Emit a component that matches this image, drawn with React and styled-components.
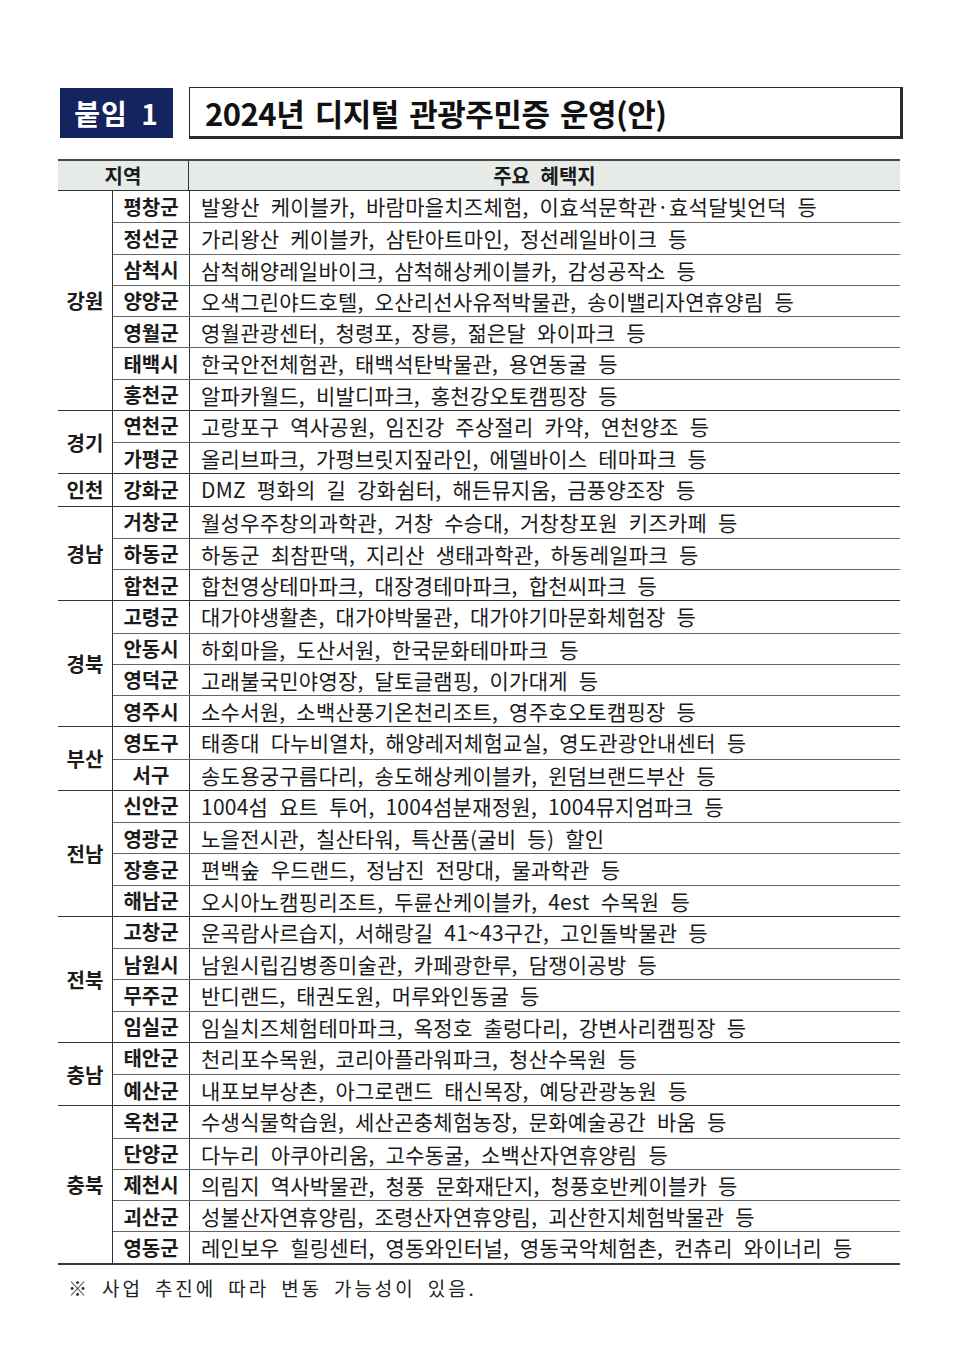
import React from "react";
import styled, { createGlobalStyle } from "styled-components";

const Global = createGlobalStyle`
  html, body { margin: 0; padding: 0; background: #fff; }
  body { font-family: "Noto Sans CJK KR", "Noto Sans", sans-serif; color: #1b1b1b; }
`;

const Page = styled.div`
  width: 960px;
  padding: 87px 0 40px 58px;
  box-sizing: border-box;
`;

const TitleRow = styled.div`
  display: flex;
  gap: 16px;
  align-items: flex-start;
  width: 845px;
`;

const Badge = styled.div`
  margin-left: 2px;
  margin-top: 1px;
  width: 113px;
  height: 50px;
  background: #14245e;
  color: #fff;
  display: flex;
  align-items: center;
  justify-content: center;
  font-size: 28px;
  font-weight: 700;
  letter-spacing: 1px;
  word-spacing: 6px;
`;

const TitleBox = styled.div`
  flex: 1;
  height: 52px;
  box-sizing: border-box;
  border: 1px solid #2a2a2a;
  border-right-width: 3px;
  border-bottom-width: 3px;
  display: flex;
  align-items: center;
  padding-left: 15px;
  font-size: 31px;
  font-weight: 700;
  letter-spacing: -0.5px;
  word-spacing: 4px;
  color: #111;
`;

const Table = styled.div`
  margin-top: 20px;
  width: 842px;
  border-top: 2px solid #4a4a4a;
  border-bottom: 2px solid #3a3a3a;
`;

const HeadRow = styled.div`
  display: grid;
  grid-template-columns: 131px 1fr;
  height: 30px;
  box-sizing: border-box;
  background: #e6ebe8;
  border-bottom: 1px solid #333;
`;

const HeadCell = styled.div`
  display: flex;
  align-items: center;
  justify-content: center;
  font-size: 20px;
  font-weight: 700;
  word-spacing: 6px;
  padding-bottom: 1px;
  border-right: ${p => (p.$divider ? "1px solid #333" : "none")};
`;

const Group = styled.div`
  display: flex;
  border-top: ${p => (p.$first ? "none" : "1px solid #333")};
`;

const RegionCell = styled.div`
  width: 54px;
  flex: none;
  border-right: 1px solid #333;
  display: flex;
  align-items: center;
  justify-content: center;
  font-size: 20px;
  font-weight: 700;
`;

const SubList = styled.div`
  flex: 1;
  display: flex;
  flex-direction: column;
`;

const Row = styled.div`
  display: grid;
  grid-template-columns: 77px 1fr;
  height: 31.26px;
  box-sizing: border-box;
  border-top: ${p => (p.$first ? "none" : "1px solid #666")};
`;

const SubCell = styled.div`
  border-right: 1px solid #333;
  display: flex;
  align-items: center;
  justify-content: center;
  font-size: 20px;
  font-weight: 700;
  padding-bottom: 3px;
`;

const Content = styled.div`
  display: flex;
  align-items: center;
  padding-left: 11px;
  padding-bottom: 3px;
  font-size: 21px;
  letter-spacing: 0.25px;
  word-spacing: 6px;
  white-space: nowrap;
  color: #1b1b1b;
`;

const Note = styled.div`
  margin-top: 9px;
  padding-left: 10px;
  font-size: 19px;
  letter-spacing: 2.9px;
  word-spacing: 5px;
  color: #222;
`;

const data = [
  ["강원", [
    ["평창군", "발왕산 케이블카, 바람마을치즈체험, 이효석문학관·효석달빛언덕 등"],
    ["정선군", "가리왕산 케이블카, 삼탄아트마인, 정선레일바이크 등"],
    ["삼척시", "삼척해양레일바이크, 삼척해상케이블카, 감성공작소 등"],
    ["양양군", "오색그린야드호텔, 오산리선사유적박물관, 송이밸리자연휴양림 등"],
    ["영월군", "영월관광센터, 청령포, 장릉, 젊은달 와이파크 등"],
    ["태백시", "한국안전체험관, 태백석탄박물관, 용연동굴 등"],
    ["홍천군", "알파카월드, 비발디파크, 홍천강오토캠핑장 등"],
  ]],
  ["경기", [
    ["연천군", "고랑포구 역사공원, 임진강 주상절리 카약, 연천양조 등"],
    ["가평군", "올리브파크, 가평브릿지짚라인, 에델바이스 테마파크 등"],
  ]],
  ["인천", [
    ["강화군", "DMZ 평화의 길 강화쉼터, 해든뮤지움, 금풍양조장 등"],
  ]],
  ["경남", [
    ["거창군", "월성우주창의과학관, 거창 수승대, 거창창포원 키즈카페 등"],
    ["하동군", "하동군 최참판댁, 지리산 생태과학관, 하동레일파크 등"],
    ["합천군", "합천영상테마파크, 대장경테마파크, 합천씨파크 등"],
  ]],
  ["경북", [
    ["고령군", "대가야생활촌, 대가야박물관, 대가야기마문화체험장 등"],
    ["안동시", "하회마을, 도산서원, 한국문화테마파크 등"],
    ["영덕군", "고래불국민야영장, 달토글램핑, 이가대게 등"],
    ["영주시", "소수서원, 소백산풍기온천리조트, 영주호오토캠핑장 등"],
  ]],
  ["부산", [
    ["영도구", "태종대 다누비열차, 해양레저체험교실, 영도관광안내센터 등"],
    ["서구", "송도용궁구름다리, 송도해상케이블카, 윈덤브랜드부산 등"],
  ]],
  ["전남", [
    ["신안군", "1004섬 요트 투어, 1004섬분재정원, 1004뮤지엄파크 등"],
    ["영광군", "노을전시관, 칠산타워, 특산품(굴비 등) 할인"],
    ["장흥군", "편백숲 우드랜드, 정남진 전망대, 물과학관 등"],
    ["해남군", "오시아노캠핑리조트, 두륜산케이블카, 4est 수목원 등"],
  ]],
  ["전북", [
    ["고창군", "운곡람사르습지, 서해랑길 41~43구간, 고인돌박물관 등"],
    ["남원시", "남원시립김병종미술관, 카페광한루, 담쟁이공방 등"],
    ["무주군", "반디랜드, 태권도원, 머루와인동굴 등"],
    ["임실군", "임실치즈체험테마파크, 옥정호 출렁다리, 강변사리캠핑장 등"],
  ]],
  ["충남", [
    ["태안군", "천리포수목원, 코리아플라워파크, 청산수목원 등"],
    ["예산군", "내포보부상촌, 아그로랜드 태신목장, 예당관광농원 등"],
  ]],
  ["충북", [
    ["옥천군", "수생식물학습원, 세산곤충체험농장, 문화예술공간 바움 등"],
    ["단양군", "다누리 아쿠아리움, 고수동굴, 소백산자연휴양림 등"],
    ["제천시", "의림지 역사박물관, 청풍 문화재단지, 청풍호반케이블카 등"],
    ["괴산군", "성불산자연휴양림, 조령산자연휴양림, 괴산한지체험박물관 등"],
    ["영동군", "레인보우 힐링센터, 영동와인터널, 영동국악체험촌, 컨츄리 와이너리 등"],
  ]],
];

export default function App() {
  return (
    <>
      <Global />
      <Page>
        <TitleRow>
          <Badge>붙임 1</Badge>
          <TitleBox>2024년 디지털 관광주민증 운영(안)</TitleBox>
        </TitleRow>
        <Table>
          <HeadRow>
            <HeadCell $divider>지역</HeadCell>
            <HeadCell>주요 혜택지</HeadCell>
          </HeadRow>
          {data.map(([region, rows], gi) => (
            <Group key={region} $first={gi === 0}>
              <RegionCell>{region}</RegionCell>
              <SubList>
                {rows.map(([sub, text], ri) => (
                  <Row key={sub} $first={ri === 0}>
                    <SubCell>{sub}</SubCell>
                    <Content>{text}</Content>
                  </Row>
                ))}
              </SubList>
            </Group>
          ))}
        </Table>
        <Note>※ 사업 추진에 따라 변동 가능성이 있음.</Note>
      </Page>
    </>
  );
}
